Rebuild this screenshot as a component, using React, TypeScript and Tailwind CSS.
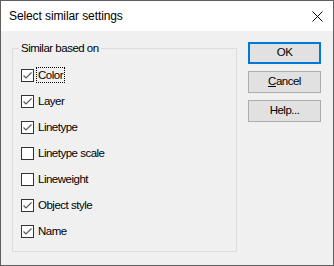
import React from 'react';

const items = [
  { name: 'Color', checked: true, focused: true },
  { name: 'Layer', checked: true },
  { name: 'Linetype', checked: true },
  { name: 'Linetype scale', checked: false },
  { name: 'Lineweight', checked: false },
  { name: 'Object style', checked: true },
  { name: 'Name', checked: true },
];

const CheckBox: React.FC<{ checked: boolean }> = ({ checked }) => (
  <div className="w-[13px] h-[13px] border border-[#333333] bg-white flex items-center justify-center shrink-0">
    {checked && (
      <svg width="11" height="11" viewBox="0 0 11 11">
        <path d="M1.5 5.5 L4 8 L9.5 2.5" fill="none" stroke="#5a5a5a" strokeWidth="1.2" />
      </svg>
    )}
  </div>
);

const App: React.FC = () => {
  return (
    <div
      className="w-[334px] h-[266px] border border-[#5f5f5f] bg-[#f0f0f0] flex flex-col text-[11.5px] tracking-[-0.5px] text-black"
      style={{ fontFamily: '"Liberation Sans", Arial, sans-serif' }}
    >
      {/* Title bar */}
      <div className="h-[30px] bg-white flex items-center justify-between pl-[8px] pr-[10px] shrink-0">
        <span className="leading-none text-[12px] tracking-[-0.1px]">Select similar settings</span>
        <svg width="11" height="11" viewBox="0 0 11 11">
          <path d="M0.5 0.5 L10.5 10.5 M10.5 0.5 L0.5 10.5" stroke="#000" strokeWidth="1" />
        </svg>
      </div>

      <div className="flex flex-1">
        <fieldset className="ml-[11px] mt-[9px] w-[225px] h-[212px] border border-[#dcdcdc] pl-[6px] pt-[6px]">
          <legend className="px-[2px] leading-[16px]">Similar based on</legend>
          <div className="flex flex-col">
            {items.map((item) => (
              <div key={item.name} className="h-[26px] flex items-center pl-[2px]">
                <CheckBox checked={item.checked} />
                <span
                  className={`ml-[2px] px-[1px] leading-[14px] border ${
                    item.focused ? 'border-dotted border-black' : 'border-transparent'
                  }`}
                >
                  {item.name}
                </span>
              </div>
            ))}
          </div>
        </fieldset>

        <div className="ml-[11px] mt-[11px] flex flex-col gap-[7px]">
          <button className="w-[73px] h-[22px] bg-[#e1e1e1] border-2 border-[#0078d7] leading-none">OK</button>
          <button className="w-[73px] h-[22px] bg-[#e1e1e1] border border-[#adadad] leading-none">
            <span className="underline">C</span>ancel
          </button>
          <button className="w-[73px] h-[22px] bg-[#e1e1e1] border border-[#adadad] leading-none">Help...</button>
        </div>
      </div>
    </div>
  );
};

export default App;
